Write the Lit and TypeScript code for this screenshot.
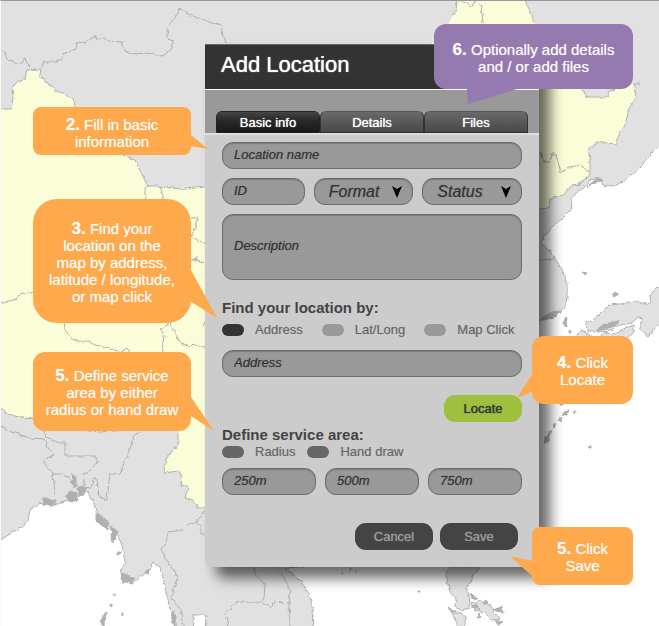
import { LitElement, html, css, svg } from "lit";
import { customElement, property, state } from "lit/decorators.js";
import { classMap } from "lit/directives/class-map.js";

const BORDERS = [
  // north-western borders
  "M0 50L5 53L8 60L16 63L22 62L25 58L27 64L33 70L40 69L44 62L54 62L63 58L64 53L76 49L77 43L86 42L92 38L97 36L98 39L105 38L108 41L121 42L125 51L134 54L145 53L155 54L160 57L168 53L171 48L173 41L168 39L167 30L170 22L176 17L180 9L190 15L202 19L212 23L221 25L223 36L227 43",
  "M0 109L11 109L13 98L12 88L16 83L25 79L27 70L41 70L40 75L48 84L57 91L68 95L74 101L76 112",
  "M122 155L135 160L142 175L148 186L160 186L170 188L185 189L206 187",
  "M145 200L145 188L148 186M160 186L164 199",
  // inner provinces, west
  "M0 303L9 301L17 299L20 295L34 291",
  "M65 323L64 328L70 337L76 341L87 341L95 345L110 348L120 352L127 348L131 353",
  "M170 323L161 329L164 336L162 350L160 354M170 323L175 332L180 343L190 347L193 344L206 349",
  "M191 218L197 218L195 229L191 236L198 240L206 244",
  "M191 259L197 260L206 263M196 257V262",
  "M202 325L206 323",
  // southern borders
  "M-4 406L8 414L22 418L34 419L60 425L100 432L115 431L125 430",
  "M0 427L12 432L30 438L44 439M44 431L46 437L60 443L65 443L65 456L96 456L97 462L91 470L83 474L85 486",
  "M44 439L48 448L54 455L45 459L45 466L52 472L54 482L56 505",
  "M52 474L62 474L70 478L75 488",
  "M83 487L91 488L94 478L97 478L99 497L107 500L110 473L120 474L126 458L131 446L133 436L141 431",
  "M178 429L178 444L166 459L164 473L179 471L182 480L180 485L188 486L185 498L193 500L197 507L206 507",
  "M206 510L196 522L190 523L183 530L168 532L166 543L162 549L166 560L174 570L178 578L173 590L172 598L181 610L184 626",
  "M195 522L201 526L201 533L206 534",
  // indochina
  "M254 567L255 574L265 585L264 598L261 602L236 602L230 609L225 614L228 626",
  "M276 567L285 580L290 590L289 603L275 601L271 608L262 603M289 603L290 626",
  // north-eastern borders
  "M457 0L456 12L448 22M459 0L466 3L471 6L476 2L481 5L483 23",
  "M525 0L528 7L532 14L533 22",
  "M540 153L545 162L550 162L552 154L556 154L561 173L570 167L580 165L590 172",
  "M577 187L590 175L590 160L588 149L600 141L615 145L618 137L625 125L629 108L636 98L634 84L640 84",
  "M582 89L587 97L608 97L609 92L620 86",
  "M540 209L549 208L550 199L564 195L572 185L580 184L587 178",
  "M540 260L554 259",
];

const LAND = [
  "M-9 -9H670V136L658 147L650 155L643 163L635 173L625 180L613 187L605 186L600 178L590 180L583 188L576 193L571 200L572 209L563 218L553 226L548 232L543 237L541 243L549 250L556 260L563 272L567 283L567 297L566 305L560 312L548 314L538 325L420 310L390 560L285 568L300 580L308 592L313 607L314 635H205L206 615H194L193 635H179L171 612L167 597L164 582L160 568L153 562L150 570L140 577L132 584L122 580L121 572L125 562L122 545L115 530L108 525L100 517L92 500L87 492L78 496L65 502L50 506L40 503L30 510L28 520L22 527L10 534L-9 546Z",
  // japan
  "M670 276L659 286L651 294L650 303L643 304L638 301L630 303L609 305L600 314L592 321L586 322L587 331L598 332L610 330L620 325L632 323L638 317L643 320L639 328L648 336L655 328L670 318Z",
  "M588 341L600 340L604 332L612 334L622 330L634 325L633 332L626 341Z",
  "M575 341L578 333L582 330L589 334L594 341Z",
  // philippines
  "M450 566L446 575L448 584L450 593L456 598L455 607L461 610L470 608L469 594L466 588L471 581L475 572L482 566Z",
  "M452 613L460 613L466 618L465 626L458 627Z",
  "M472 604L480 601L490 605L494 613L500 619L492 620L484 612L475 610Z",
];

const CHINA =
  "M-9 109H11L13 98L12 88L16 83L25 79L27 70H41L40 75L48 84L57 91L68 95L74 101L76 112L122 155L135 160L142 175L148 186L170 188L206 187L300 200L420 60L448 22L456 12L457 -9H524L528 7L532 14L533 22L560 60L582 89L587 97H608L609 92L634 84L636 98L629 108L625 125L618 137L615 145L600 141L588 149L590 160V175L577 183L572 185L564 195L550 199L549 208L500 212L300 480L206 507H197L193 500L185 497L188 486L180 485L182 480L179 471L164 473L166 459L178 444V429L115 431L100 432L60 425L34 419L22 418L8 414L-9 400Z";

const ISLETS = [
  "M43 498L53 500L55 506L44 505Z", "M66 496L70 491L76 492L77 500L70 503Z",
  "M73 474L76 478L76 487L72 482ZM78 488L87 487L84 494L78 495Z",
  "M96 512L109 522L108 529L101 525L96 519Z", "M111 527L118 531L116 538L113 543Z",
  "M122 573L135 578L132 583L123 582Z", "M144 572L150 569L148 574Z",
  "M101 620L106 612L105 624L102 626Z", "M110 604h2v2h-2ZM114 594h1v2h-1ZM118 552h2v2h-2ZM122 613h1v2h-1Z",
  "M173 610L176 617L174 626L171 622Z", "M540 319L552 312L560 310L557 316L545 320Z",
  "M583 272L587 273L585 275ZM612 295L615 292L618 294L614 297ZM565 318L567 317L566 327L564 325ZM569 330L572 331L571 334Z",
  "M562 413L566 410L569 410L567 415L562 416ZM573 411h2v2h-2ZM560 417L561 422L559 420ZM553 424L556 425L554 427Z",
  "M545 436L552 430L549 440L544 444ZM589 446h2v2h-2ZM560 404h3v1h-3Z",
  "M341 573h2v1h-2ZM350 568v3h1v-3ZM356 571h1v2h-1ZM418 591h2v1h-2Z",
  "M470 594L478 598L474 600ZM493 609L502 606L503 613L497 612ZM478 613L482 617L477 618ZM496 620L503 622L499 625Z",
  "M596 330L604 324L620 321L616 325L602 330Z", "M587 187L596 179L602 179L600 182L592 184Z",
  "M448 607L456 612L450 611ZM476 604L472 608L480 609ZM485 600L488 602L484 605Z",
];

/** The map that lies under the dialog. */
@customElement("backdrop-map")
export class BackdropMap extends LitElement {
  static styles = css`
    :host { display: block; }
    svg { display: block; width: 100%; height: 100%; }
    .land { fill: #e1e1e1; stroke: #b0b0b0; }
    .china { fill: #fbfdd8; }
    .border { fill: none; stroke: #b0b0b0; }
    .islet { fill: #b0b0b0; stroke: #b0b0b0; }
  `;

  render() {
    return html`<svg viewBox="0 0 659 626" preserveAspectRatio="xMidYMin slice" aria-hidden="true">
      <filter id="rough" x="-5%" y="-5%" width="110%" height="110%">
        <feTurbulence type="fractalNoise" baseFrequency="0.2" numOctaves="2" seed="4" />
        <feDisplacementMap in="SourceGraphic" scale="4" xChannelSelector="R" yChannelSelector="G" />
      </filter>
      <g filter="url(#rough)">
        ${LAND.map((d) => svg`<path class="land" d=${d} />`)}
        <path class="china" d=${CHINA} />
        ${BORDERS.map((d) => svg`<path class="border" d=${d} />`)}
        ${ISLETS.map((d) => svg`<path class="islet" d=${d} />`)}
      </g>
    </svg>`;
  }
}

/** A numbered speech bubble; its class picks the place and the tail. */
@customElement("step-callout")
export class StepCallout extends LitElement {
  @property() step = "";

  static styles = css`
    :host {
      position: absolute;
      display: flex;
      align-items: center;
      justify-content: center;
      box-sizing: border-box;
      padding-top: 2px;
      border-radius: 12px;
      background: #ffa94d;
      color: #fff;
      font-size: 15px;
      line-height: 17px;
      text-align: center;
      text-shadow: 0 0 1px rgba(255, 255, 255, 0.5);
    }
    :host::after {
      content: "";
      position: absolute;
      background: inherit;
    }
    p { margin: 0; }
    b { font-size: 17px; line-height: 16px; }
  `;

  render() {
    return html`<p><b>${this.step}.</b> <slot></slot></p>`;
  }
}

@customElement("app-root")
export class AppRoot extends LitElement {
  @state() private tab = "Basic info";

  static styles = css`
    :host {
      display: block;
      font-family: "Liberation Sans", Arial, Helvetica, sans-serif;
      font-size: 13px;
    }
    *, *::before { box-sizing: border-box; }

    .stage {
      position: relative;
      min-height: 100vh;
      padding: 44px 120px 59px 205px;
      background: #fff;
      overflow: hidden;
    }
    .stage::before {
      content: "";
      position: absolute;
      inset: 0;
      z-index: 1;
      border-top: 1px solid #9298a3;
      border-left: 1px solid #fafafa;
      pointer-events: none;
    }
    backdrop-map { position: absolute; inset: 0; }
    .anchor { position: relative; z-index: 2; }

    .panel {
      background: #ccc;
      border-radius: 0 0 8px 8px;
      box-shadow: 11px 11px 14px rgba(0, 0, 0, 0.6);
    }
    h1 {
      margin: 0;
      padding: 0 16px;
      border-top: 1px solid #666;
      border-bottom: 1px solid #fff;
      background: #333;
      color: #fff;
      font-size: 22px;
      font-weight: 400;
      line-height: 40px;
      height: 46px;
      text-shadow: 0 0 1px #fff;
    }
    .tabs {
      display: flex;
      padding: 21px 11px 0;
      border-bottom: 2px solid #ddd;
      background: #999;
    }
    .tab {
      flex: 1;
      height: 22px;
      padding: 0;
      border: 1px solid #333;
      border-top-color: #555;
      border-radius: 6px 6px 0 0;
      background: linear-gradient(#696969, #484848);
      color: #fff;
      font: inherit;
      text-shadow: 0 0 1px #fff;
    }
    .tab.on { background: linear-gradient(#454545, #2a2a2a 40%, #191919); border-color: #222; }

    form {
      display: flex;
      flex-direction: column;
      padding: 7px 17px 17px;
    }
    .row { display: flex; gap: 9px; margin-top: 9px; }
    .trio { display: grid; grid-template-columns: 83fr 100fr 100fr; }
    .field {
      width: 100%;
      min-width: 0;
      height: 27px;
      margin: 0;
      padding: 0 11px 2px;
      border: 1px solid #6e6e6e;
      border-radius: 11px;
      background: #999;
      box-shadow: inset 0 1px 1px #777;
      color: #333;
      font: inherit;
      font-style: italic;
      text-shadow: 0 0 1px rgba(51, 51, 51, 0.5);
      outline: none;
      resize: none;
      appearance: none;
    }
    .field::placeholder { color: #333; opacity: 1; }
    .area { height: 66px; margin-top: 9px; padding-top: 23px; }
    .pick { position: relative; }
    .pick .field { padding: 0 14px; font-size: 16px; }
    .arrow {
      position: absolute;
      right: 11px;
      top: 8px;
      width: 10px;
      height: 12px;
      pointer-events: none;
    }

    fieldset { margin: 0; padding: 0; border: 0; min-width: 0; }
    legend {
      padding: 0;
      color: #444;
      font-size: 15px;
      font-weight: 700;
      line-height: 18px;
    }
    .find { margin-top: 19px; }
    .area-set { margin-top: 4px; }
    .choices { display: flex; line-height: 14px; }
    .find .choices { gap: 19px; padding: 6px 0 4px; }
    .area-set .choices { gap: 12px; padding-top: 1px; }
    .choice {
      display: flex;
      align-items: center;
      gap: 11px;
      color: #666;
      white-space: nowrap;
      text-shadow: 0 0 1px rgba(102, 102, 102, 0.4);
    }
    .choice input {
      width: 22px;
      height: 12px;
      margin: 0;
      border-radius: 6px;
      background: #999;
      appearance: none;
    }
    .area-set .choice input { background: #666; }
    .choice input:checked { background: #333; }

    .btn {
      width: 78px;
      height: 27px;
      padding: 0;
      border: 0;
      border-radius: 11px;
      background: #444;
      color: #999;
      font: inherit;
      text-shadow: 0 0 1px currentColor;
    }
    .locate { align-self: flex-end; margin-top: 18px; background: #9fc03f; color: #333; }
    .actions { display: flex; justify-content: flex-end; gap: 7px; margin-top: 28px; padding-right: 4px; }

    .left { right: calc(100% + 14px); width: 158px; }
    .left::after { left: 100%; clip-path: polygon(0 0, 100% 100%, 0 66%); }
    .fill { top: 63px; height: 48px; padding-top: 4px; border-radius: 8px; }
    .fill::after { top: 28px; width: 17px; height: 14px; clip-path: polygon(0 0, 100% 100%, 0 80%); }
    .locate-by { top: 155px; height: 124px; border-radius: 24px; }
    .locate-by::after { top: 71px; width: 26px; height: 48px; }
    .define { top: 308px; height: 79px; }
    .define::after { top: 45px; width: 23px; height: 34px; clip-path: polygon(0 0, 100% 100%, 0 56%); }
    .right { left: calc(100% - 7px); width: 101px; }
    .right::after { right: 100%; }
    .click-locate { top: 292px; height: 68px; }
    .click-locate::after { top: 38px; width: 15px; height: 24px; clip-path: polygon(100% 0, 0 100%, 100% 74%); }
    .click-save { top: 483px; height: 58px; border-radius: 8px; }
    .click-save::after { top: 29px; width: 22px; height: 20px; clip-path: polygon(0 0, 100% 25%, 100% 100%); }
    .optional { left: calc(100% - 105px); top: -20px; width: 199px; height: 65px; background: #957ab0; }
    .optional::after { left: 33px; top: 100%; width: 50px; height: 15px; clip-path: polygon(0 0, 100% 0, 2% 100%); }
  `;

  private pick(name: string) {
    return html`<div class="pick">
      <select class="field" aria-label=${name}><option>${name}</option></select>
      <svg class="arrow" viewBox="0 0 10 12" aria-hidden="true"><path d="M0 0L5 3L10 0L5 12Z" /></svg>
    </div>`;
  }

  private choice(group: string, name: string, checked = false) {
    return html`<label class="choice"><input type="radio" name=${group} ?checked=${checked} />${name}</label>`;
  }

  private text(name: string) {
    return html`<input class="field" type="text" placeholder=${name} aria-label=${name} />`;
  }

  render() {
    return html`
      <main class="stage">
        <backdrop-map></backdrop-map>
        <div class="anchor">
          <section class="panel">
            <h1>Add Location</h1>
            <div class="tabs" role="tablist">
              ${["Basic info", "Details", "Files"].map(
                (t) => html`<button
                  role="tab"
                  aria-selected=${t === this.tab}
                  class=${classMap({ tab: true, on: t === this.tab })}
                  @click=${() => (this.tab = t)}
                >${t}</button>`
              )}
            </div>
            <form @submit=${(e: Event) => e.preventDefault()}>
              ${this.text("Location name")}
              <div class="row trio">
                ${this.text("ID")} ${this.pick("Format")} ${this.pick("Status")}
              </div>
              <textarea class="field area" placeholder="Description" aria-label="Description"></textarea>
              <fieldset class="find">
                <legend>Find your location by:</legend>
                <div class="choices">
                  ${this.choice("find", "Address", true)} ${this.choice("find", "Lat/Long")}
                  ${this.choice("find", "Map Click")}
                </div>
                <div class="row">${this.text("Address")}</div>
              </fieldset>
              <button class="btn locate" type="button">Locate</button>
              <fieldset class="area-set">
                <legend>Define service area:</legend>
                <div class="choices">
                  ${this.choice("area", "Radius")} ${this.choice("area", "Hand draw")}
                </div>
                <div class="row">${["250m", "500m", "750m"].map((r) => this.text(r))}</div>
              </fieldset>
              <div class="actions">
                <button class="btn" type="button">Cancel</button>
                <button class="btn" type="submit">Save</button>
              </div>
            </form>
          </section>

          <step-callout class="left fill" step="2">Fill in basic<br />information</step-callout>
          <step-callout class="left locate-by" step="3"
            >Find your<br />location on the<br />map by address,<br />latitude / longitude,<br />or map click</step-callout
          >
          <step-callout class="left define" step="5"
            >Define service<br />area by either<br />radius or hand draw</step-callout
          >
          <step-callout class="right click-locate" step="4">Click<br />Locate</step-callout>
          <step-callout class="right click-save" step="5">Click<br />Save</step-callout>
          <step-callout class="optional" step="6">Optionally add details<br />and / or add files</step-callout>
        </div>
      </main>
    `;
  }
}
